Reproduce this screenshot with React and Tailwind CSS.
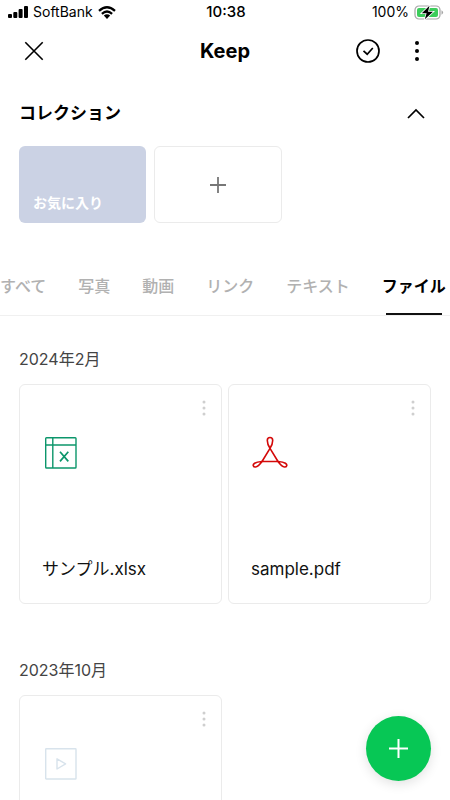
import React from "react";

const TABS = ["すべて", "写真", "動画", "リンク", "テキスト", "ファイル"];

function Dots({ className, r = 2, gap = 8 }) {
  return (
    <svg className={className} viewBox="0 0 6 24" fill="currentColor" aria-hidden="true">
      <circle cx="3" cy={12 - gap} r={r} />
      <circle cx="3" cy="12" r={r} />
      <circle cx="3" cy={12 + gap} r={r} />
    </svg>
  );
}

function StatusBar() {
  return (
    <div className="grid h-6 grid-cols-[1fr_auto_1fr] items-center pr-1.5 pl-2 text-sm leading-6">
      <div className="flex items-center gap-[5px]">
        <svg className="h-3 w-5" viewBox="0 0 20 12" aria-label="電波">
          <rect x="0" y="8" width="4" height="4" rx="1" />
          <rect x="5.3" y="6" width="4" height="6" rx="1" />
          <rect x="10.6" y="3" width="4" height="9" rx="1" />
          <rect x="16" y="0" width="4" height="12" rx="1" />
        </svg>
        <span>SoftBank</span>
        <svg className="h-[13px] w-[18px]" viewBox="0 0 18 13" aria-label="Wi-Fi">
          <g fill="none" stroke="#000" strokeWidth="2.3">
            <path d="M1 4.8Q9 -2.2 17 4.8" />
            <path d="M3.9 7.8Q9 3.2 14.1 7.8" />
          </g>
          <path d="M5.8 9.6Q9 6.9 12.2 9.6L9 12.9Z" />
        </svg>
      </div>
      <span className="text-[15px] font-medium">10:38</span>
      <div className="flex items-center justify-end gap-[5px]">
        <span>100%</span>
        <svg className="h-[15px] w-[30px]" viewBox="0 0 30 15" aria-label="充電中">
          <rect x="1" y="1" width="25" height="13" rx="4" fill="none" stroke="#a5a5a5" strokeWidth="1.2" />
          <rect x="3" y="3" width="21" height="9" rx="2" fill="#3ccd5b" />
          <path d="M27.5 5.2q1.6 .8 1.6 2.3t-1.6 2.3z" fill="#a5a5a5" />
          <path d="M15.5 0.8L7.8 8.2h4.8L10.8 14.2L19 6.8H14z" fill="#000" stroke="#fff" strokeWidth="1.6" paintOrder="stroke" />
        </svg>
      </div>
    </div>
  );
}

function Header() {
  return (
    <header className="grid h-[53px] grid-cols-[1fr_auto_1fr] items-center px-6">
      <button aria-label="閉じる" className="w-5">
        <svg className="size-5" viewBox="0 0 20 20" fill="none" stroke="#000" strokeWidth="1.6">
          <path d="M1.3 1.3L18.7 18.7M18.7 1.3L1.3 18.7" />
        </svg>
      </button>
      <h1 className="text-xl font-bold">Keep</h1>
      <div className="flex items-center justify-end gap-[34px] pr-1.5">
        <button aria-label="選択">
          <svg className="size-6" viewBox="0 0 24 24" fill="none" stroke="#000" strokeWidth="1.7">
            <circle cx="12" cy="12" r="11" />
            <path d="M7.5 11.8L11.2 15.2L16.8 9" />
          </svg>
        </button>
        <button aria-label="メニュー">
          <Dots className="h-6 w-1.5" />
        </button>
      </div>
    </header>
  );
}

function Collections() {
  return (
    <section className="px-[19px]">
      <div className="flex h-[69px] items-center justify-between pt-1 pr-1.5">
        <h2 className="text-[17px] font-bold">コレクション</h2>
        <button aria-label="折りたたむ">
          <svg className="h-4 w-[18px]" viewBox="0 0 18 16" fill="none" stroke="#000" strokeWidth="1.7">
            <path d="M1 12L9 4L17 12" />
          </svg>
        </button>
      </div>
      <div className="flex gap-2">
        <button className="flex h-[77px] w-[127px] items-end rounded-md bg-[#cbd2e4] px-3.5 pb-2.5 text-left text-sm font-bold text-white">
          お気に入り
        </button>
        <button aria-label="コレクションを追加" className="flex h-[77px] w-32 items-center justify-center rounded-md border border-[#ebebeb]">
          <svg className="size-4" viewBox="0 0 16 16" stroke="#777" strokeWidth="1.8">
            <path d="M8 0V16M0 8H16" />
          </svg>
        </button>
      </div>
    </section>
  );
}

function Tabs() {
  return (
    <nav className="mt-8 flex h-[61px] gap-8 overflow-hidden border-b border-[#f0f0f0] text-base font-medium whitespace-nowrap text-[#b1b1b1]">
      {TABS.map((tab) =>
        tab === "ファイル" ? (
          <button key={tab} aria-current="page" className="relative shrink-0 pt-0.5 font-bold text-black">
            {tab}
            <span className="absolute inset-x-1 bottom-0 h-0.5 bg-[#111]" />
          </button>
        ) : (
          <button key={tab} className="shrink-0 pt-0.5">{tab}</button>
        )
      )}
    </nav>
  );
}

function ExcelIcon() {
  return (
    <svg className="h-9 w-9" viewBox="0 0 36 36" fill="none" stroke="#0c966b" strokeWidth="1.4">
      <rect x="2.7" y="3.7" width="30.3" height="30.3" rx="0.8" />
      <path d="M2.7 11H33M9.8 3.7V34" />
      <path d="M17 17.8L25.3 27.4M25.3 17.8L17 27.4" strokeWidth="1.7" />
    </svg>
  );
}

function PdfIcon() {
  return (
    <svg className="h-9 w-9" viewBox="0 0 36 36" fill="none" stroke="#d40909" strokeWidth="1.6" strokeLinejoin="round">
      <path d="M18 14.3C16.4 11.8 15.3 8.8 15.3 6.4C15.3 2.6 20.7 2.6 20.7 6.4C20.7 8.8 19.6 11.8 18 14.3Z" />
      <path d="M18 14.3L10 27.5H26Z" />
      <path d="M10 27.5C7 27.7 4.5 28 2.6 29.2C0.2 30.7 1.2 33.2 3.6 33C5.8 32.8 8 30.3 10 27.5Z" />
      <path d="M26 27.5C29 27.7 31.5 28 33.4 29.2C35.8 30.7 34.8 33.2 32.4 33C30.2 32.8 28 30.3 26 27.5Z" />
    </svg>
  );
}

function VideoIcon() {
  return (
    <svg className="h-9 w-9" viewBox="0 0 36 36" fill="none" stroke="#d8e3ec" strokeWidth="1.4">
      <rect x="2.7" y="3.7" width="30.3" height="30.3" rx="0.6" />
      <path d="M14 13.8V24L22.6 18.9Z" strokeLinejoin="round" />
    </svg>
  );
}

function FileCard({ icon, name }) {
  return (
    <article className="flex h-[220px] flex-col justify-between rounded-md border border-[#ebebeb] pt-[11px] pr-3.5 pb-5 pl-[22px]">
      <div className="flex flex-col">
        <button aria-label="ファイルメニュー" className="self-end text-[#cfcfcf]">
          <Dots className="h-6 w-1.5" r={1.5} gap={6} />
        </button>
        <div className="mt-[14px] pl-px">{icon}</div>
      </div>
      <p className="text-[17px] leading-7 text-[#111]">{name}</p>
    </article>
  );
}

function Month({ title, children }) {
  return (
    <section className="pb-[51px]">
      <h2 className="flex h-[30px] items-center text-base text-[#444]">{title}</h2>
      <div className="mt-2.5 grid grid-cols-2 gap-1.5">{children}</div>
    </section>
  );
}

export default function App() {
  return (
    <div className="relative flex h-screen flex-col overflow-hidden bg-white font-[Inter,'Noto_Sans_CJK_JP',sans-serif] text-black">
      <StatusBar />
      <Header />
      <Collections />
      <Tabs />
      <main className="min-h-0 flex-1 overflow-hidden px-[19px] pt-7">
        <Month title="2024年2月">
          <FileCard icon={<ExcelIcon />} name="サンプル.xlsx" />
          <FileCard icon={<PdfIcon />} name="sample.pdf" />
        </Month>
        <Month title="2023年10月">
          <FileCard icon={<VideoIcon />} name="" />
        </Month>
      </main>
      <button
        aria-label="追加"
        className="absolute right-[19px] bottom-[19px] flex size-[65px] items-center justify-center rounded-full bg-[#07c755] shadow-[0_3px_12px_rgba(0,0,0,0.12)]"
      >
        <svg className="size-[19px]" viewBox="0 0 19 19" stroke="#fff" strokeWidth="2">
          <path d="M9.5 0V19M0 9.5H19" />
        </svg>
      </button>
    </div>
  );
}
